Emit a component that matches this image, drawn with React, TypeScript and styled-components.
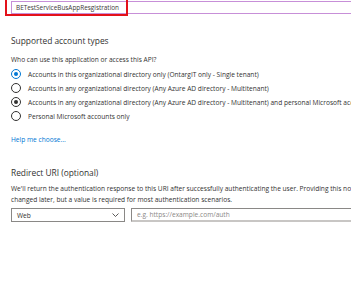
import * as React from "react";
import styled, { createGlobalStyle } from "styled-components";

const GlobalStyle = createGlobalStyle`
  html, body {
    margin: 0;
    padding: 0;
    background: #ffffff;
    overflow: hidden;
  }
  body {
    font-family: "Open Sans", "Noto Sans", sans-serif;
    color: #323130;
  }
`;

const Page = styled.div`
  position: relative;
  width: 351px;
  height: 295px;
  overflow: hidden;
  padding-left: 11px;
  box-sizing: border-box;
  white-space: nowrap;
`;

const NameField = styled.div`
  height: 11px;
  margin-top: 1px;
  width: 400px;
  border: 1px solid #c78fd8;
  display: flex;
  align-items: center;
  padding-left: 4px;
  font-size: 6.4px;
  color: #3b3a39;
`;

// red annotation box drawn over the name field
const Highlight = styled.div`
  position: absolute;
  left: 5px;
  top: -2px;
  width: 119px;
  height: 14px;
  border: 2px solid #e3111a;
`;

const SectionTitle = styled.div<{ $top: number }>`
  margin-top: ${(p) => p.$top}px;
  font-size: 8.4px;
  line-height: 13px;
  color: #323130;
`;

const Caption = styled.div`
  margin-top: 8px;
  font-size: 6.6px;
  line-height: 9px;
`;

const RadioList = styled.div`
  margin-top: 5px;
  display: flex;
  flex-direction: column;
  gap: 4px;
`;

const Option = styled.label`
  display: flex;
  align-items: center;
  gap: 7px;
  height: 10px;
  font-size: 6.6px;
`;

const Circle = styled.span<{ $state: "blue" | "dark" | "off" }>`
  width: 8px;
  height: 8px;
  border-radius: 50%;
  border: 1px solid ${(p) => (p.$state === "blue" ? "#0078d4" : "#323130")};
  display: flex;
  align-items: center;
  justify-content: center;
  flex: none;

  &::after {
    content: "";
    display: ${(p) => (p.$state === "off" ? "none" : "block")};
    width: 4px;
    height: 4px;
    border-radius: 50%;
    background: ${(p) => (p.$state === "blue" ? "#0078d4" : "#323130")};
  }
`;

const HelpLink = styled.div`
  margin-top: 14px;
  font-size: 6.6px;
  line-height: 9px;
  color: #0078d4;
`;

const Description = styled.div`
  margin-top: 4px;
  font-size: 6.6px;
  line-height: 11px;
`;

const UriRow = styled.div`
  margin-top: 3px;
  display: flex;
  gap: 6px;
`;

const Select = styled.div`
  width: 114px;
  height: 14px;
  box-sizing: border-box;
  border: 1px solid #8a8886;
  display: flex;
  align-items: center;
  justify-content: space-between;
  padding: 0 5px;
  font-size: 6.6px;
  flex: none;
`;

const UriInput = styled.div`
  width: 260px;
  height: 14px;
  box-sizing: border-box;
  border: 1px solid #8a8886;
  border-bottom: 2px solid #c8c6c4;
  display: flex;
  align-items: center;
  padding-left: 5px;
  font-size: 6.6px;
  color: #8a8886;
  flex: none;
`;

const options: { label: string; state: "blue" | "dark" | "off" }[] = [
  { label: "Accounts in this organizational directory only (OntargIT only - Single tenant)", state: "blue" },
  { label: "Accounts in any organizational directory (Any Azure AD directory - Multitenant)", state: "off" },
  {
    label:
      "Accounts in any organizational directory (Any Azure AD directory - Multitenant) and personal Microsoft accounts (e.g. Skype, Xbox)",
    state: "dark",
  },
  { label: "Personal Microsoft accounts only", state: "off" },
];

export default function App() {
  return (
    <Page>
      <GlobalStyle />
      <NameField>BETestServiceBusAppResgistration</NameField>
      <Highlight />
      <SectionTitle $top={20}>Supported account types</SectionTitle>
      <Caption>Who can use this application or access this API?</Caption>
      <RadioList>
        {options.map((o) => (
          <Option key={o.label}>
            <Circle $state={o.state} />
            {o.label}
          </Option>
        ))}
      </RadioList>
      <HelpLink>Help me choose...</HelpLink>
      <SectionTitle $top={22}>Redirect URI (optional)</SectionTitle>
      <Description>
        We'll return the authentication response to this URI after successfully authenticating the user. Providing this now is optional and it can be
        <br />
        changed later, but a value is required for most authentication scenarios.
      </Description>
      <UriRow>
        <Select>
          Web
          <svg width="7" height="4" viewBox="0 0 7 4">
            <path d="M0.5 0.5 L3.5 3.5 L6.5 0.5" fill="none" stroke="#323130" strokeWidth="0.8" />
          </svg>
        </Select>
        <UriInput>e.g. https://example.com/auth</UriInput>
      </UriRow>
    </Page>
  );
}
